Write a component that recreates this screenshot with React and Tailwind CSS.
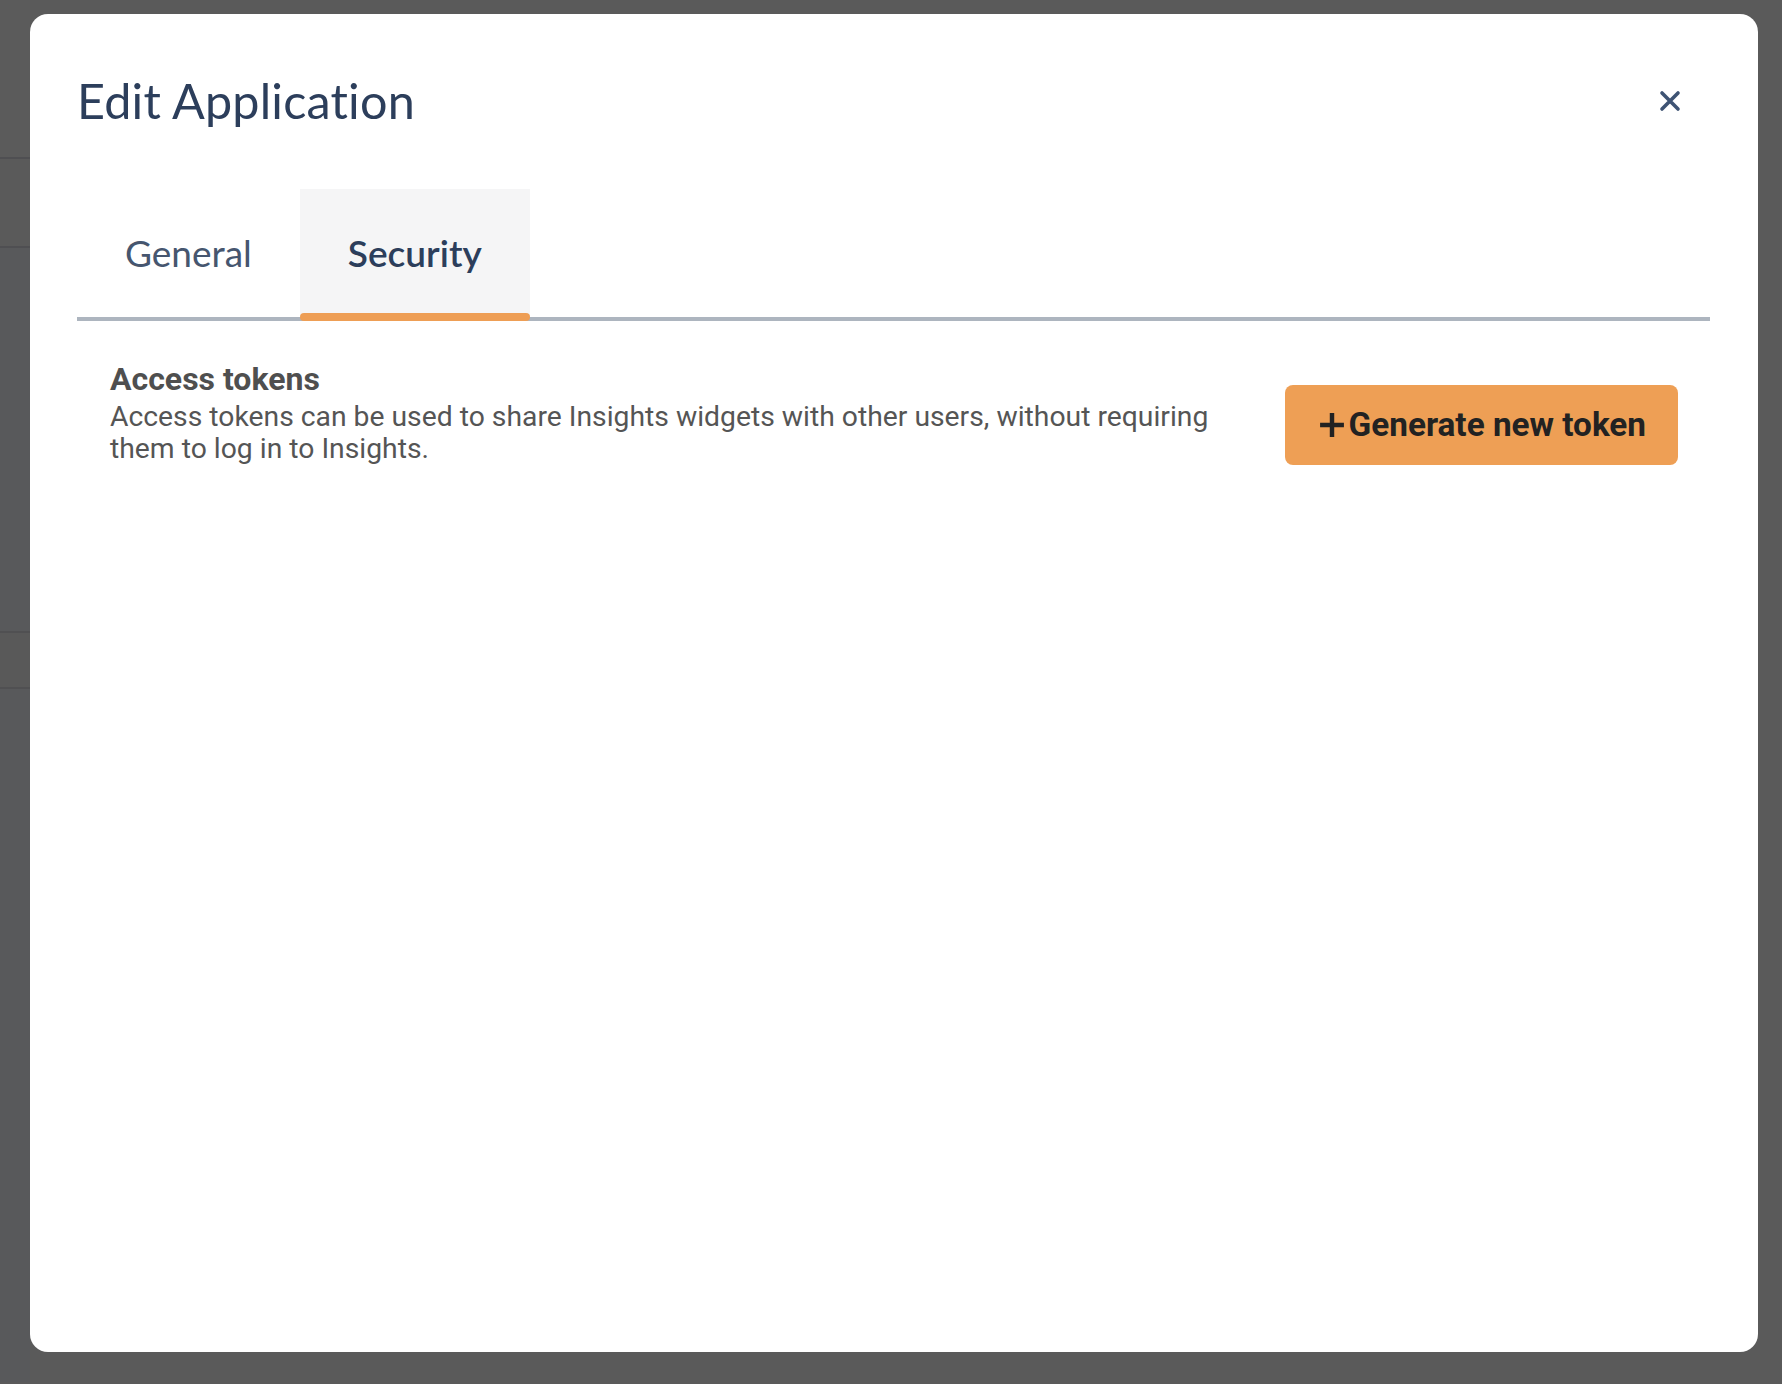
import React, { useState } from 'react';

const PlusIcon = () => (
  <svg width="26" height="26" viewBox="0 0 24 24" className="shrink-0">
    <path d="M12 1v22M1 12h22" stroke="#222" strokeWidth="4.1" fill="none" />
  </svg>
);

const CloseIcon = () => (
  <svg width="22" height="22" viewBox="0 0 22 22">
    <path d="M3 3l16 16M19 3L3 19" stroke="#3e5373" strokeWidth="3.6" strokeLinecap="round" fill="none" />
  </svg>
);

const EditApplicationModal = () => {
  const [tab, setTab] = useState('security');

  const tabs = [
    { id: 'general', label: 'General' },
    { id: 'security', label: 'Security' },
  ];

  return (
    <div className="absolute left-[30px] top-[14px] w-[1728px] h-[1338px] bg-white rounded-[18px] px-[47px] pt-[57px]">
      {/* header */}
      <div className="flex items-center justify-between">
        <h1 className="text-[48.5px] leading-[1.2] text-[#2c3e5b] font-normal tracking-[0.2px]" style={{ fontFamily: 'Lato, sans-serif' }}>
          Edit Application
        </h1>
        <button className="mr-[30px] mt-[2px] w-[22px] h-[22px] flex items-center justify-center">
          <CloseIcon />
        </button>
      </div>

      {/* tabs */}
      <div className="mt-[60px] flex border-b-[4px] border-[#adb5bf] w-[1633px]" style={{ fontFamily: 'Lato, sans-serif' }}>
        {tabs.map((t) => {
          const active = tab === t.id;
          return (
            <button
              key={t.id}
              onClick={() => setTab(t.id)}
              className={`relative h-[128px] px-[48px] flex items-center text-[37px] leading-[1.2] ${
                active ? 'bg-[#f5f5f6] text-[#2c3e5b] font-semibold' : 'text-[#46566f] font-normal'
              }`}
            >
              {t.label}
              {active && <span className="absolute left-0 right-0 bottom-[-4px] h-[8px] rounded-[4px] bg-[#ee9e55]" />}
            </button>
          );
        })}
      </div>

      {/* security content */}
      {tab === 'security' && (
        <div className="mt-[40px] px-[33px] flex items-end gap-[40px]" style={{ fontFamily: 'Roboto, sans-serif' }}>
          <div className="flex-1">
            <h3 className="text-[32px] leading-[36px] font-bold text-[#4f4f4f]">Access tokens</h3>
            <p className="mt-[4px] text-[28.3px] leading-[32px] text-[#555555]">
              Access tokens can be used to share Insights widgets with other users, without requiring them to log in to Insights.
            </p>
          </div>
          <button className="h-[80px] pl-[34px] pr-[32px] rounded-[8px] bg-[#ee9f55] flex items-center gap-[4px] text-[33.3px] font-bold text-[#222222]">
            <PlusIcon />
            <span>Generate new token</span>
          </button>
        </div>
      )}
    </div>
  );
};

export default function App() {
  return (
    <div className="relative w-[1782px] h-[1384px] overflow-hidden bg-[#5a5a5a]">
      {/* dimmed page behind the overlay */}
      <div className="w-[30px] flex flex-col">
        <div className="h-[157px] bg-[#5b5b5b]" />
        <div className="h-[89px] border-t-[2px] border-[#4f4f52] bg-[#5a5a5a]" />
        <div className="h-[385px] border-t-[2px] border-[#4f4f52] bg-[#58595b]" />
        <div className="h-[56px] border-t-[2px] border-[#505052] bg-[#595959]" />
        <div className="h-[695px] border-t-[2px] border-[#505052] bg-[#58595b]" />
      </div>
      <EditApplicationModal />
    </div>
  );
}
